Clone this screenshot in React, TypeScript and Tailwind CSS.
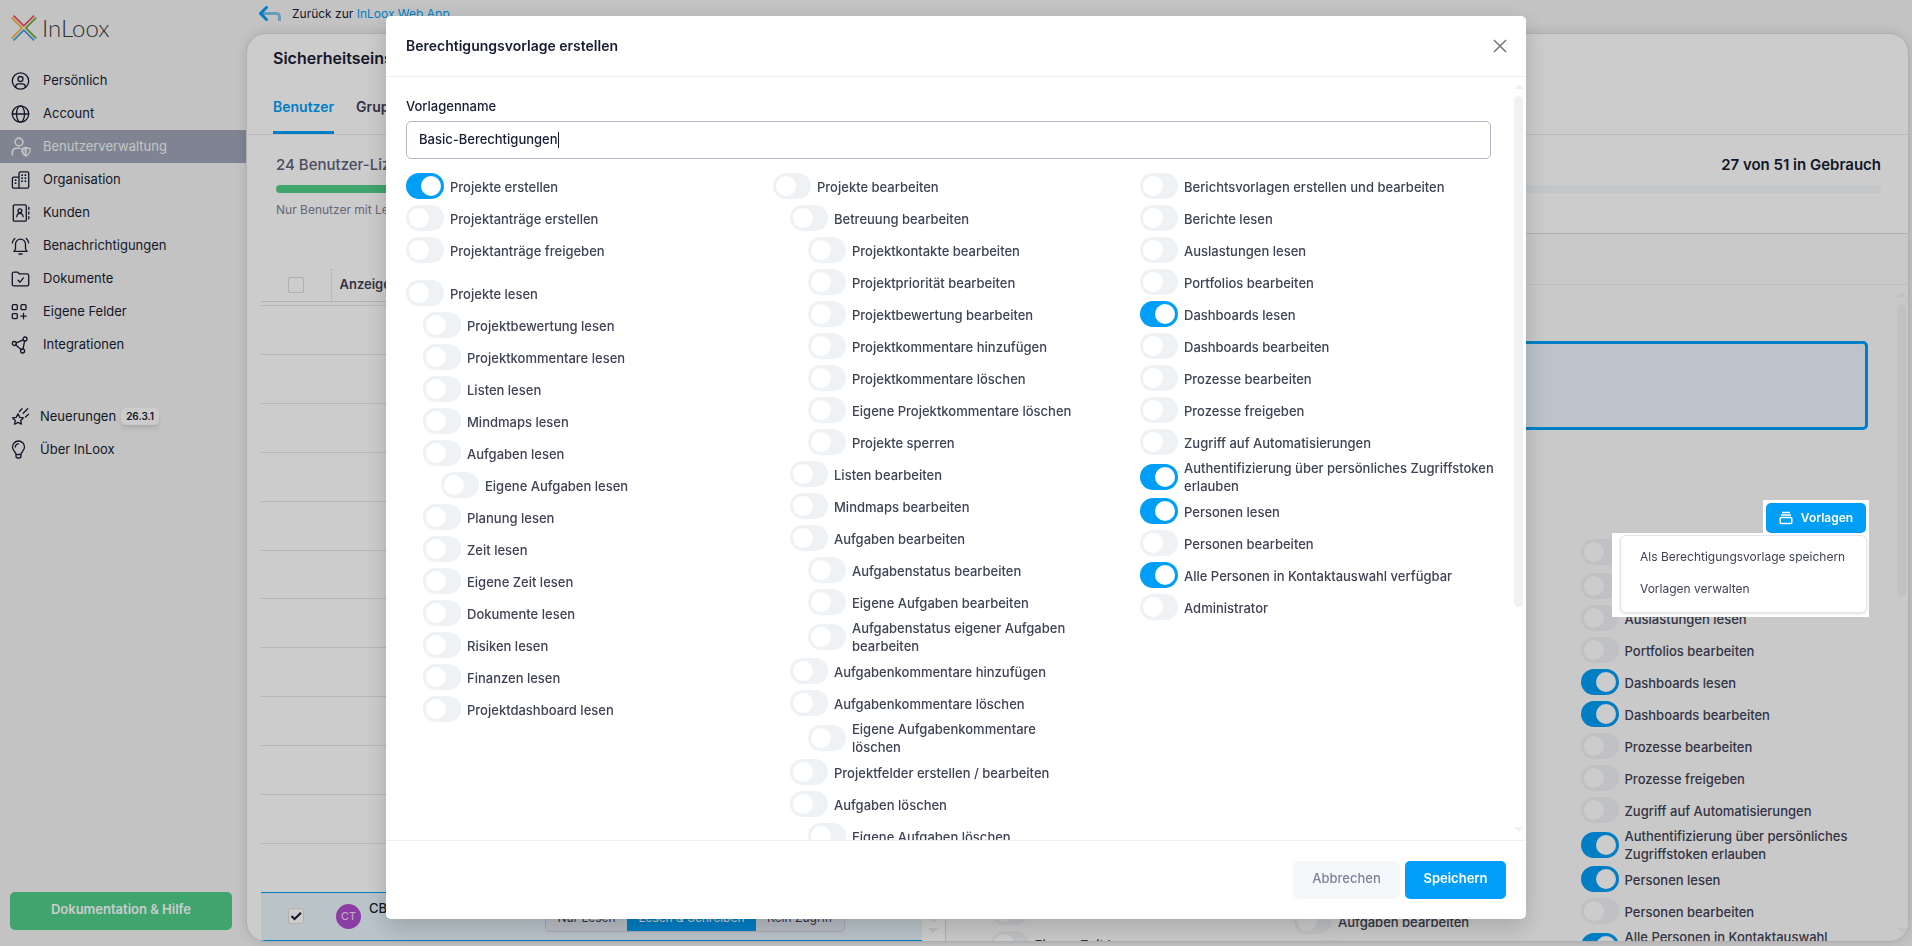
import type { ReactNode } from "react";
import { clsx } from "clsx";

type Permission = { label: string; level?: number; on?: boolean; spaced?: boolean };

const readColumn: Permission[] = [
  { label: "Projekte erstellen", on: true },
  { label: "Projektanträge erstellen" },
  { label: "Projektanträge freigeben" },
  { label: "Projekte lesen", spaced: true },
  { label: "Projektbewertung lesen", level: 1 },
  { label: "Projektkommentare lesen", level: 1 },
  { label: "Listen lesen", level: 1 },
  { label: "Mindmaps lesen", level: 1 },
  { label: "Aufgaben lesen", level: 1 },
  { label: "Eigene Aufgaben lesen", level: 2 },
  { label: "Planung lesen", level: 1 },
  { label: "Zeit lesen", level: 1 },
  { label: "Eigene Zeit lesen", level: 1 },
  { label: "Dokumente lesen", level: 1 },
  { label: "Risiken lesen", level: 1 },
  { label: "Finanzen lesen", level: 1 },
  { label: "Projektdashboard lesen", level: 1 },
];

const editColumn: Permission[] = [
  { label: "Projekte bearbeiten" },
  { label: "Betreuung bearbeiten", level: 1 },
  { label: "Projektkontakte bearbeiten", level: 2 },
  { label: "Projektpriorität bearbeiten", level: 2 },
  { label: "Projektbewertung bearbeiten", level: 2 },
  { label: "Projektkommentare hinzufügen", level: 2 },
  { label: "Projektkommentare löschen", level: 2 },
  { label: "Eigene Projektkommentare löschen", level: 2 },
  { label: "Projekte sperren", level: 2 },
  { label: "Listen bearbeiten", level: 1 },
  { label: "Mindmaps bearbeiten", level: 1 },
  { label: "Aufgaben bearbeiten", level: 1 },
  { label: "Aufgabenstatus bearbeiten", level: 2 },
  { label: "Eigene Aufgaben bearbeiten", level: 2 },
  { label: "Aufgabenstatus eigener Aufgaben bearbeiten", level: 2 },
  { label: "Aufgabenkommentare hinzufügen", level: 1 },
  { label: "Aufgabenkommentare löschen", level: 1 },
  { label: "Eigene Aufgabenkommentare löschen", level: 2 },
  { label: "Projektfelder erstellen / bearbeiten", level: 1 },
  { label: "Aufgaben löschen", level: 1 },
  { label: "Eigene Aufgaben löschen", level: 2 },
];

const generalLabels = [
  "Berichtsvorlagen erstellen und bearbeiten",
  "Berichte lesen",
  "Auslastungen lesen",
  "Portfolios bearbeiten",
  "Dashboards lesen",
  "Dashboards bearbeiten",
  "Prozesse bearbeiten",
  "Prozesse freigeben",
  "Zugriff auf Automatisierungen",
  "Authentifizierung über persönliches Zugriffstoken erlauben",
  "Personen lesen",
  "Personen bearbeiten",
  "Alle Personen in Kontaktauswahl verfügbar",
  "Administrator",
];

const generalColumn = (active: number[]): Permission[] =>
  generalLabels.map((label, i) => ({ label, on: active.includes(i) }));

function Toggle({ id, on }: { id: string; on?: boolean }) {
  return (
    <input
      id={id}
      type="checkbox"
      defaultChecked={on}
      className="flex h-[26px] w-[38px] shrink-0 appearance-none items-center rounded-full bg-[#eff2f5] px-[3px] before:block before:size-5 before:rounded-full before:bg-white before:content-[''] checked:justify-end checked:bg-[#009ef7]"
    />
  );
}

function PermissionList({ items, prefix }: { items: Permission[]; prefix: string }) {
  return (
    <ul className="min-w-0">
      {items.map((p, i) => (
        <li
          key={p.label}
          className={clsx(
            "flex min-h-8 items-center gap-[6px]",
            !p.level && "-mr-2",
            p.level === 1 && "px-[17px]",
            p.level === 2 && "pr-[38px] pl-[35px]",
            p.spaced && "mt-[11px]",
          )}
        >
          <Toggle id={`${prefix}-${i}`} on={p.on} />
          <label htmlFor={`${prefix}-${i}`} className="min-w-0 pt-px text-[13px] leading-[18px] font-medium text-[#3f4254]">
            {p.label}
          </label>
        </li>
      ))}
    </ul>
  );
}

function Icon({ children, className }: { children: ReactNode; className?: string }) {
  return (
    <svg
      viewBox="0 0 20 20"
      className={clsx("size-5 shrink-0", className)}
      fill="none"
      stroke="currentColor"
      strokeWidth="1.3"
      strokeLinecap="round"
      strokeLinejoin="round"
      aria-hidden="true"
    >
      {children}
    </svg>
  );
}

const navItems: { label: string; active?: boolean; icon: ReactNode }[] = [
  {
    label: "Persönlich",
    icon: (
      <Icon>
        <circle cx="9.5" cy="10" r="8.2" />
        <circle cx="9.5" cy="8" r="2.5" />
        <path d="M4.800 16.200v-.9a2.600 2.600 0 0 1 2.600-2.500h4.200a2.600 2.600 0 0 1 2.600 2.500v.9" />
      </Icon>
    ),
  },
  {
    label: "Account",
    icon: (
      <Icon>
        <circle cx="9.5" cy="10" r="8.2" />
        <ellipse cx="9.5" cy="10" rx="4" ry="8.2" />
        <path d="M1.300 10h16.400" />
      </Icon>
    ),
  },
  {
    label: "Benutzerverwaltung",
    active: true,
    icon: (
      <Icon>
        <circle cx="8" cy="5" r="3.900" strokeWidth="1.600" />
        <path d="M1.300 18v-2.600a4.200 4.200 0 0 1 4.200-4.200h3.200" strokeWidth="1.600" />
        <path d="M10.800 11.600c1.700 0 3-.4 4.200-1.200 1.300.8 2.600 1.200 4.300 1.200 0 3.700-1 5.900-4.300 7.300-3.200-1.400-4.200-3.600-4.200-7.300Z" />
        <path d="M15 10.400v8.500c-3.200-1.400-4.200-3.600-4.200-7.300 1.700 0 3-.4 4.200-1.200Z" fill="currentColor" fillOpacity="0.5" />
      </Icon>
    ),
  },
  {
    label: "Organisation",
    icon: (
      <Icon>
        <path d="M8 18.200V3.200A1.400 1.400 0 0 1 9.400 1.800h6.900a1.400 1.400 0 0 1 1.400 1.400v13.600a1.400 1.400 0 0 1-1.400 1.400H2.800a1.400 1.400 0 0 1-1.400-1.400V8.500a1.400 1.400 0 0 1 1.400-1.400H8" />
        <path d="M11 5.200h.2M14.300 5.200h.2M11 8.200h.2M14.300 8.200h.2M11 11.200h.2M14.300 11.200h.2M4.500 10.200h.2M4.500 13.200h.2" strokeWidth="1.700" />
      </Icon>
    ),
  },
  {
    label: "Kunden",
    icon: (
      <Icon>
        <rect x="2.300" y="1.800" width="13" height="16.400" rx="1.200" />
        <circle cx="8.900" cy="7.700" r="1.900" />
        <path d="M5.700 13.700c.2-2.300 1.300-3.300 3.200-3.300s3 1 3.200 3.300M17.800 4.200v2.200M17.800 8.900v2.200M17.800 13.600v2.200" />
      </Icon>
    ),
  },
  {
    label: "Benachrichtigungen",
    icon: (
      <Icon>
        <path d="M4.500 13V8.200a5 5 0 0 1 10 0V13l1.600 2.400H2.900ZM8 18h3M3.800 2.500A8 8 0 0 0 1.300 6.900M15.200 2.500a8 8 0 0 1 2.500 4.400" />
      </Icon>
    ),
  },
  {
    label: "Dokumente",
    icon: (
      <Icon>
        <path d="M1.300 15.400V4.600a1.400 1.400 0 0 1 1.400-1.400h4l1.600 1.600h8a1.400 1.400 0 0 1 1.400 1.400v9.200a1.400 1.400 0 0 1-1.400 1.400H2.700a1.400 1.400 0 0 1-1.400-1.400Z" />
        <path d="m7 11.200 2 2 3.400-4.300" />
      </Icon>
    ),
  },
  {
    label: "Eigene Felder",
    icon: (
      <Icon>
        <rect x="1.300" y="2.700" width="5" height="5" rx="1" />
        <rect x="10" y="2.700" width="5" height="5" rx="1" />
        <rect x="1.300" y="11.600" width="5" height="5" rx="1" />
        <path d="M12.500 11.400v5.400M9.800 14.100h5.400" />
      </Icon>
    ),
  },
  {
    label: "Integrationen",
    icon: (
      <Icon>
        <circle cx="3.300" cy="8.500" r="2" />
        <circle cx="14" cy="4" r="2" />
        <circle cx="11.600" cy="16" r="2" />
        <path d="m5.200 7.800 7-3M4.800 10l5.300 4.500M13.600 6l-1.600 8" />
      </Icon>
    ),
  },
];

function Sidebar() {
  return (
    <aside className="flex w-[246px] shrink-0 flex-col pb-4">
      <a href="#start" className="flex items-center gap-[5px] pt-[15px] pl-[11px] text-[#3f3f3f]">
        <svg viewBox="0 0 26 26" className="size-[26px]" fill="none" strokeWidth="1.700" aria-hidden="true">
          <path d="M2.500.6 12.800 10.900 23.100.6" stroke="#f1475f" />
          <path d="M2.500 25.400 12.800 15.100l10.300 10.300" stroke="#3f9bdc" />
          <path d="M.6 2.700 10.900 13 .6 23.300" stroke="#f2b233" />
          <path d="M25.200 2.700 14.900 13l10.300 10.300" stroke="#5fae2e" />
        </svg>
        <span className="font-[Lato,sans-serif] text-[24px] leading-[26px] font-light">InLoox</span>
      </a>
      <nav className="mt-[23px]">
        {navItems.map((item) => (
          <a
            key={item.label}
            href="#nav"
            className={clsx(
              "flex h-[33px] items-center gap-3 pl-[11px] text-[13px]",
              item.active ? "bg-[#a1a5b7] text-[#f5f5f5]" : "text-[#181c32]",
            )}
          >
            {item.icon}
            {item.label}
          </a>
        ))}
      </nav>
      <hr className="mx-[13px] mt-[19px] border-[#eff0f2]" />
      <nav className="mt-[19px] text-[13px] text-[#181c32]">
        <a href="#news" className="flex h-[33px] items-center gap-[9px] pl-[11px]">
          <Icon>
            <path d="m7 6.800 1.700 3.500 3.800.5-2.800 2.600.7 3.800L7 15.400l-3.400 1.800.7-3.800-2.800-2.600 3.800-.5ZM8.500 4.500l2.500-2.700M12.200 6.200l4.500-4.500M14.500 10l3-2.800" />
          </Icon>
          Neuerungen
          <span className="ml-[-4px] rounded-[5px] bg-white px-[5px] text-[10px] leading-[17px] font-semibold shadow-md">26.3.1</span>
        </a>
        <a href="#about" className="flex h-[33px] items-center gap-[9px] pl-[11px]">
          <Icon>
            <path d="M5 14.500c0-2.600-3.500-3.700-3.500-7.500a6 6 0 0 1 12 0c0 3.800-3.500 4.900-3.500 7.500ZM5 14.500V16a2 2 0 0 0 2 2h1a2 2 0 0 0 2-2v-1.500M4.300 7A3.200 3.200 0 0 1 7.500 3.800" />
          </Icon>
          Über InLoox
        </a>
      </nav>
      <button type="button" className="mt-auto mr-[14px] ml-[10px] h-[38px] rounded-[5px] bg-[#50cd89] pb-[2px] text-[13px] font-semibold text-white">
        Dokumentation &amp; Hilfe
      </button>
    </aside>
  );
}

function ScrollTrack({ thumb }: { thumb: string }) {
  return (
    <div className="flex w-[9px] shrink-0 flex-col items-center pt-[7px] pb-2" aria-hidden="true">
      <svg viewBox="0 0 10 5" className="h-[5px] w-[10px] shrink-0"><path d="M0 5 5 0l5 5Z" fill="#eff2f5" /></svg>
      <div className={clsx("mt-[7px] w-[9px] rounded-full bg-[#eff2f5]", thumb)} />
      <svg viewBox="0 0 10 5" className="mt-auto h-[5px] w-[10px] shrink-0"><path d="M0 0h10L5 5Z" fill="#eff2f5" /></svg>
    </div>
  );
}

const checkboxClass =
  "flex size-4 appearance-none items-center justify-center rounded-[2px] border border-[#dcdcdc] bg-white";

function UserTable() {
  return (
    <div className="flex min-w-0 basis-[42%] items-start overflow-hidden pt-9 pl-[14px]">
      <table className="min-w-0 flex-1 border-collapse text-left text-[13px] text-[#3f4254]">
        <thead>
          <tr className="h-8 border-b border-[#dcdcdc]">
            <th className="w-[70px] border-r border-dotted border-[#d5d5d5] p-0 pl-[27px]">
              <input type="checkbox" aria-label="Alle auswählen" className={checkboxClass} />
            </th>
            <th className="p-0 pl-2 font-semibold">Anzeigename</th>
          </tr>
        </thead>
        <tbody>
          <tr className="h-1 border-b border-[#e4e4e4]"><td colSpan={2} className="p-0" /></tr>
          {Array.from({ length: 12 }, (_, i) => (
            <tr key={i} className={clsx("border-b", i === 5 ? "h-12" : "h-[49px]", i === 11 ? "border-[#009ef7]" : "border-[#e4e4e4]")}>
              <td colSpan={2} className="p-0" />
            </tr>
          ))}
          <tr className="h-12 border-b border-[#009ef7] bg-[#e8f4fb]">
            <td className="p-0 pl-[27px]">
              <span className="relative flex size-4">
                <input type="checkbox" defaultChecked aria-label="CB auswählen" className={checkboxClass} />
                <svg viewBox="0 0 16 16" className="pointer-events-none absolute inset-0 size-4" fill="none" stroke="#181c32" strokeWidth="2" aria-hidden="true">
                  <path d="m3.500 8 3 3L13 4.800" />
                </svg>
              </span>
            </td>
            <td className="p-0">
              <div className="flex items-center pl-[5px]">
                <span className="flex size-[25px] shrink-0 items-center justify-center rounded-full bg-[#b04dcf] text-[11px] text-white/80">CT</span>
                <span className="w-[184px] shrink-0 pb-[14px] pl-2 font-medium text-[#181c32]">CB</span>
                <span className="flex h-[31px] w-[300px] overflow-hidden rounded-[4px] border border-[#d5d5e0] bg-[#e6eef6] text-[12px]">
                  <button type="button" className="w-[81px] pt-1">Nur Lesen</button>
                  <button type="button" className="w-[129px] bg-[#009ef7] pt-1 text-white">Lesen &amp; Schreiben</button>
                  <button type="button" className="flex-1 pt-1">Kein Zugriff</button>
                </span>
              </div>
            </td>
          </tr>
        </tbody>
      </table>
      <div className="flex w-[23px] flex-col items-center justify-end gap-[6px] self-stretch pb-2" aria-hidden="true">
        <div className="h-40 w-[9px] rounded-full bg-[#eff2f5]" />
        <svg viewBox="0 0 10 5" className="h-[5px] w-[10px]"><path d="M0 0h10L5 5Z" fill="#e8ecf0" /></svg>
      </div>
    </div>
  );
}

function PermissionPane() {
  return (
    <div className="flex min-w-0 flex-1 flex-col border-t border-l border-[#dcdcdc] bg-[#fcfcfc]">
      <div className="h-[51px] shrink-0 border-b border-[#efefef]" />
      <div className="flex min-h-0 flex-1">
        <div className="min-w-0 flex-1 overflow-hidden pt-14 pr-[29px] pl-7">
          <div className="h-[89px] rounded-[5px] border-3 border-[#009ef7] bg-[#ebf4fe]" />
          <div className="mt-[103px] grid grid-cols-3 gap-4">
            <PermissionList prefix="user-read" items={readColumn} />
            <PermissionList prefix="user-edit" items={editColumn} />
            <PermissionList prefix="user-general" items={generalColumn([4, 5, 9, 10, 12])} />
          </div>
        </div>
        <div className="flex pr-[2px]">
          <ScrollTrack thumb="h-[293px]" />
        </div>
      </div>
    </div>
  );
}

function Page() {
  return (
    <main className="flex min-w-0 flex-1 flex-col pr-[3px] pb-1">
      <div className="flex h-[33px] shrink-0 items-center gap-[10px] pb-[5px] pl-3 text-[12px] text-[#181c32]">
        <svg viewBox="0 0 24 16" className="h-4 w-6" fill="none" aria-hidden="true">
          <path d="M3 7.500h15.500a3 3 0 0 1 3 3V15" stroke="#84c4ea" strokeWidth="3" />
          <path d="M8.500 1.500 2.500 7.500l6 6" stroke="#009ef7" strokeWidth="3" strokeLinecap="round" strokeLinejoin="round" />
        </svg>
        <span>
          Zurück zur <a href="#app" className="text-[#009ef7]">InLoox Web App</a>
        </span>
      </div>
      <section className="flex min-h-0 flex-1 flex-col overflow-hidden rounded-[20px] border border-[#dcdcdc] bg-white shadow-[0_0_12px_rgba(0,0,0,0.12)]">
        <h1 className="pt-[14px] pl-[26px] text-[16px] leading-5 font-semibold text-[#181c32]">Sicherheitseinstellungen</h1>
        <div className="mt-[21px] flex shrink-0 gap-[22px] border-b border-[#eaeaea] pl-[26px] text-[14px] font-semibold text-[#3f4254]" role="tablist">
          <button type="button" role="tab" aria-selected="true" className="h-[45px] border-b-3 border-[#009ef7] pb-[7px] text-[#009ef7]">Benutzer</button>
          <button type="button" role="tab" aria-selected="false" className="h-[45px] pb-[10px]">Gruppen</button>
        </div>
        <div className="h-[98px] shrink-0 pt-5 pr-[27px] pl-[29px]">
          <div className="flex justify-between leading-5 font-medium">
            <span className="text-[15px] text-[#5e6278]">24 Benutzer-Lizenzen verfügbar</span>
            <span className="text-[15px] font-semibold text-[#181c32]">27 von 51 in Gebrauch</span>
          </div>
          <div className="mt-[10px] h-2 rounded-full bg-[#f5f8fa]">
            <div className="h-2 w-[53%] rounded-full bg-[#50cd89]" />
          </div>
          <p className="mt-[9px] text-[12px] leading-4 text-[#7e8299]">Nur Benutzer mit Lese- und Schreibrechten benötigen eine Lizenz.</p>
        </div>
        <div className="flex min-h-0 flex-1">
          <UserTable />
          <PermissionPane />
        </div>
      </section>
    </main>
  );
}

function TemplateMenu() {
  return (
    <div className="absolute top-[500px] right-[43px] flex flex-col items-end">
      <div className="bg-white px-[3px] pt-[3px]">
        <button type="button" className="flex h-[30px] w-[100px] items-center justify-center gap-2 rounded-[5px] bg-[#009ef7] pb-px text-[12px] font-semibold text-white">
          <svg viewBox="0 0 14 14" className="size-[14px]" fill="none" stroke="currentColor" strokeWidth="1.500" aria-hidden="true">
            <path d="M3 1.500h8M2 4h10" />
            <rect x="1.200" y="6.500" width="11.600" height="6" rx="1" />
          </svg>
          Vorlagen
        </button>
      </div>
      <div className="bg-white pt-[2px] pr-[2px] pb-1 pl-2">
        <div className="flex w-[247px] flex-col rounded-[6px] border border-[#e4e6ef] bg-white py-[5px] text-[12px] text-[#3f4254] shadow-sm" role="menu">
          <button type="button" role="menuitem" className="h-8 pl-[19px] text-left">Als Berechtigungsvorlage speichern</button>
          <button type="button" role="menuitem" className="mb-[2px] h-8 pl-[19px] text-left">Vorlagen verwalten</button>
        </div>
      </div>
    </div>
  );
}

function TemplateDialog() {
  return (
    <div className="fixed inset-0 z-10 flex justify-center bg-black/20 pt-4 pb-[27px]">
      <TemplateMenu />
      <div role="dialog" aria-labelledby="dialog-title" className="flex w-full max-w-[1140px] flex-col rounded-[5px] bg-white shadow-[0_8px_24px_rgba(0,0,0,0.18)]">
        <header className="flex h-[61px] shrink-0 items-center justify-between border-b border-[#eff2f5] pr-[19px] pl-5">
          <h2 id="dialog-title" className="pb-[2px] text-[14px] font-semibold text-[#181c32]">Berechtigungsvorlage erstellen</h2>
          <button type="button" aria-label="Schließen" className="text-[#757575]">
            <svg viewBox="0 0 14 14" className="size-[14px]" fill="none" stroke="currentColor" strokeWidth="1.500" aria-hidden="true">
              <path d="m1 1 12 12M13 1 1 13" />
            </svg>
          </button>
        </header>
        <div className="flex min-h-0 flex-1 pr-[3px] pl-5">
          <div className="min-w-0 flex-1 overflow-hidden pt-5 pr-2">
            <label htmlFor="template-name" className="block text-[13px] leading-[18px] font-medium text-[#181c32]">Vorlagenname</label>
            <div className="mt-[6px] flex h-[38px] items-center rounded-[5px] border border-[#b5b5c3] px-3">
              <input
                id="template-name"
                defaultValue="Basic-Berechtigungen"
                className="[field-sizing:content] bg-transparent text-[13px] font-medium text-[#181c32] outline-none"
              />
              <span className="h-4 w-px bg-[#181c32]" aria-hidden="true" />
            </div>
            <div className="mt-[11px] grid grid-cols-3 gap-4">
              <PermissionList prefix="read" items={readColumn} />
              <PermissionList prefix="edit" items={editColumn} />
              <PermissionList prefix="general" items={generalColumn([4, 9, 10, 12])} />
            </div>
          </div>
          <div className="flex pl-[15px]">
            <ScrollTrack thumb="h-[511px]" />
          </div>
        </div>
        <footer className="flex h-[79px] shrink-0 items-center justify-end gap-[5px] border-t border-[#eff2f5] pr-5">
          <button type="button" className="h-[38px] w-[107px] rounded-[5px] bg-[#f5f8fa] pb-[3px] text-[13px] font-medium text-[#7e8299]">Abbrechen</button>
          <button type="button" className="h-[38px] w-[101px] rounded-[5px] bg-[#009ef7] pb-[3px] text-[13px] font-semibold text-white">Speichern</button>
        </footer>
      </div>
    </div>
  );
}

export default function App() {
  return (
    <div className="flex h-screen overflow-hidden bg-[#f4f4f4] font-[Inter,sans-serif]">
      <Sidebar />
      <Page />
      <TemplateDialog />
    </div>
  );
}
